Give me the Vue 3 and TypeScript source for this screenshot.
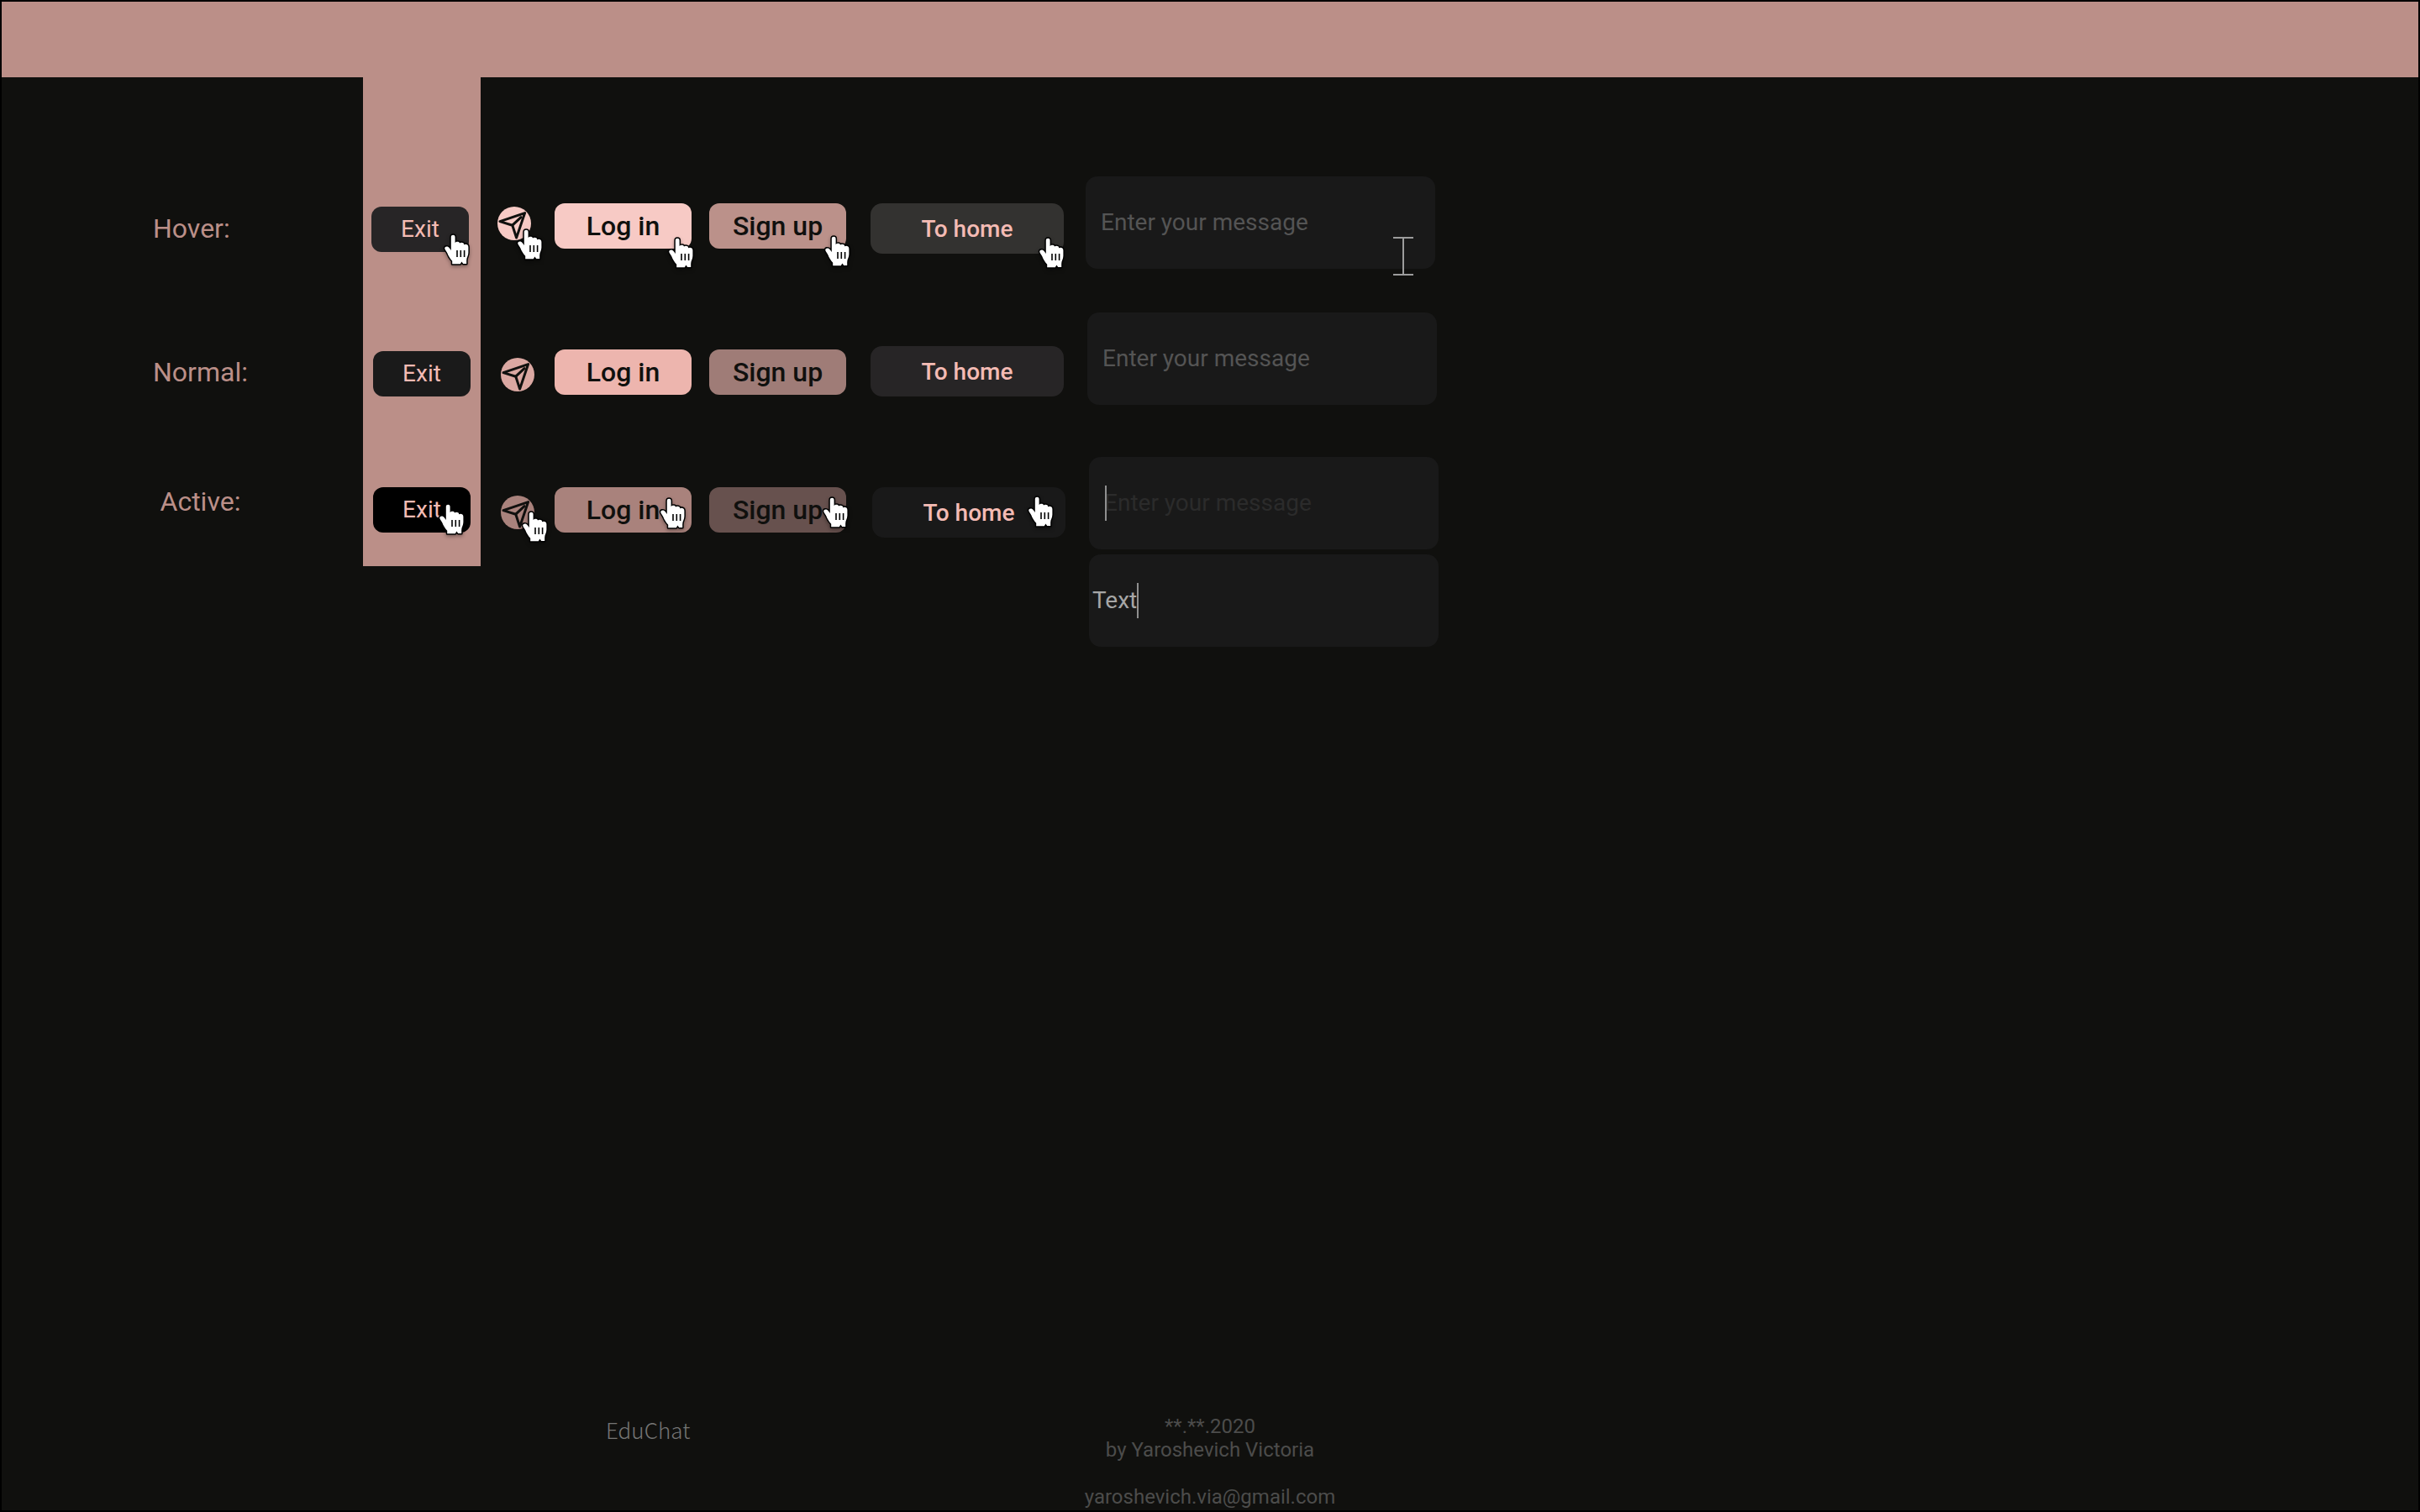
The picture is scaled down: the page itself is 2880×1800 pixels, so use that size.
<script setup lang="ts">
type State = 'hover' | 'normal' | 'active'

interface Point {
  x: number
  y: number
}

interface Sample {
  state: State
  pointer?: Point
}

interface ButtonColumn {
  kind: 'exit' | 'send' | 'login' | 'signup' | 'home'
  text: string
  samples: Sample[]
}

interface Field {
  id: string
  state: State
  value: string
  caret?: number
  beam?: Point
}

const labels: { state: State; text: string }[] = [
  { state: 'hover', text: 'Hover:' },
  { state: 'normal', text: 'Normal:' },
  { state: 'active', text: 'Active:' },
]

// Pointer positions are measured from the top left corner of each button.
function samples(hover: Point, active: Point): Sample[] {
  return [
    { state: 'hover', pointer: hover },
    { state: 'normal' },
    { state: 'active', pointer: active },
  ]
}

const columns: ButtonColumn[] = [
  { kind: 'exit', text: 'Exit', samples: samples({ x: 86, y: 32 }, { x: 78, y: 19 }) },
  { kind: 'send', text: '', samples: samples({ x: 23, y: 26 }, { x: 25, y: 18 }) },
  { kind: 'login', text: 'Log in', samples: samples({ x: 135, y: 40 }, { x: 125, y: 12 }) },
  { kind: 'signup', text: 'Sign up', samples: samples({ x: 137, y: 38 }, { x: 135, y: 11 }) },
  { kind: 'home', text: 'To home', samples: samples({ x: 200, y: 40 }, { x: 185, y: 10 }) },
]

const fields: Field[] = [
  { id: 'message-hover', state: 'hover', value: '', beam: { x: 366, y: 72 } },
  { id: 'message-normal', state: 'normal', value: '' },
  { id: 'message-active', state: 'active', value: '', caret: 19 },
  { id: 'message-typed', state: 'active', value: 'Text', caret: 57 },
]

const at = (p: Point) => ({ left: `${p.x}px`, top: `${p.y}px` })
</script>

<template>
  <div class="page">
    <header class="bar"></header>

    <main class="board">
      <div class="column labels">
        <span v-for="l in labels" :key="l.state" class="label" :class="l.state">{{ l.text }}</span>
      </div>

      <div v-for="c in columns" :key="c.kind" class="column" :class="c.kind">
        <div v-for="s in c.samples" :key="s.state" class="sample" :class="s.state">
          <button type="button" class="button" :aria-label="c.text || 'Send'">
            <svg v-if="c.kind === 'send'" class="plane" viewBox="0 0 40 40" aria-hidden="true">
              <path d="M3 17.6 L32.6 7.6 L22.6 37 L17.8 22.2 Z" />
              <path d="M17.8 22.2 L28 12.6" />
            </svg>
            <template v-else>{{ c.text }}</template>
          </button>
          <svg v-if="s.pointer" class="pointer" :style="at(s.pointer)" viewBox="0 0 31 38" aria-hidden="true">
            <path
              class="hand"
              d="M8.8 4.2 C8.8 1 13.6 1 13.6 4.2 V11 C15 9.2 18.8 9.4 19 11.6 C20.6 10.2 24.2 10.8 24.2 13.2 C26 12 29.4 12.8 29.4 16 V22.5 C29.4 26.5 27.2 28.5 27.2 32 V36 H23.2 L21.4 33.4 L19.8 36.2 H10.2 V32.8 C7.4 29.5 5.6 26.8 4.2 23 C3.4 21 1.4 19.4 1.2 17.4 C1.4 15.2 4.6 14.6 6.4 16.8 L8.8 20 Z"
            />
            <path class="creases" d="M16 20 V28 M20.3 20 V28 M24.6 20 V28" />
          </svg>
        </div>
      </div>

      <div class="column message">
        <div v-for="f in fields" :key="f.id" class="sample" :class="f.state">
          <input
            :id="f.id"
            class="field"
            :class="{ typed: f.value }"
            type="text"
            :value="f.value"
            placeholder="Enter your message"
            aria-label="Message"
          />
          <span v-if="f.caret" class="caret" :style="{ left: `${f.caret}px` }"></span>
          <span v-if="f.beam" class="beam" :style="at(f.beam)"></span>
        </div>
      </div>
    </main>

    <footer class="footer">
      <div class="brand">EduChat</div>
      <div class="credits">
        <p>**.**.2020</p>
        <p>by Yaroshevich Victoria</p>
        <a href="mailto:yaroshevich.via@gmail.com">yaroshevich.via@gmail.com</a>
      </div>
    </footer>
  </div>
</template>

<style>
body {
  margin: 0;
  background: #10100e;
}
</style>

<style scoped>
.page {
  display: flex;
  flex-direction: column;
  box-sizing: border-box;
  min-height: 100vh;
  border: 2px solid #000;
  background: #10100e;
  font-family: Roboto, "Liberation Sans", sans-serif;
}

.bar {
  height: 90px;
  background: #bb8f88;
}

.board {
  display: flex;
  flex: 1;
  align-items: flex-start;
  padding-left: 180px;
}

.column {
  display: grid;
  flex: none;
  align-items: start;
  box-sizing: border-box;
}

.labels {
  width: 112px;
  margin-right: 138px;
  padding-top: 161px;
  grid-template-rows: 171px 154px auto;
}

.label {
  color: #bb8f88;
  font-size: 32px;
  line-height: 38px;
  white-space: nowrap;
}

.label.active {
  justify-self: center;
}

.sample {
  position: relative;
}

.button {
  display: block;
  width: 100%;
  height: 100%;
  padding: 0;
  border: 0;
  border-radius: 12px;
  font-family: inherit;
  cursor: pointer;
}

/* Exit, on its accent band */
.exit {
  width: 140px;
  padding: 154px 12px 40px 10px;
  background: #bb8f88;
  grid-template-rows: 172px 162px auto;
}

.exit .sample {
  width: 116px;
  height: 54px;
  justify-self: end;
}

.exit .sample.hover {
  justify-self: start;
}

.exit .button {
  padding-bottom: 2px;
  background: #1a1a1a;
  color: #f4bbb4;
  font-size: 28px;
}

.exit .hover .button {
  background: #272526;
}

.exit .active .button {
  background: #000;
}

/* Send */
.send {
  width: 44px;
  margin-left: 20px;
  padding-top: 154px;
  grid-template-rows: 180px 164px auto;
}

.send .sample {
  width: 40px;
  height: 40px;
  justify-self: end;
}

.send .sample.hover {
  justify-self: start;
}

.send .button {
  border-radius: 50%;
  background: #dba8a2;
}

.send .hover .button {
  background: #f7cac5;
}

.send .active .button {
  background: #a9827c;
}

.plane {
  display: block;
  width: 40px;
  height: 40px;
  fill: none;
  stroke: #10100e;
  stroke-width: 3;
  stroke-linecap: round;
  stroke-linejoin: round;
}

/* Log in and Sign up */
.login,
.signup {
  width: 163px;
  padding-top: 150px;
  grid-template-rows: 174px 164px auto;
}

.login {
  margin-left: 24px;
}

.signup {
  margin-left: 21px;
}

.login .sample,
.signup .sample {
  height: 54px;
}

.login .button,
.signup .button {
  color: #10100e;
  font-size: 32px;
  font-weight: 500;
}

.login .button {
  background: #edb5ae;
}

.login .hover .button {
  background: #f7cac5;
}

.login .active .button {
  background: #a9827c;
}

.signup .button {
  background: #9f7c77;
}

.signup .hover .button {
  background: #bb918a;
}

.signup .active .button {
  background: #67514e;
}

/* To home */
.home {
  width: 232px;
  margin-left: 29px;
  padding-top: 150px;
  grid-template-rows: 170px 168px auto;
}

.home .sample {
  width: 230px;
  height: 60px;
}

.home .sample.active {
  justify-self: end;
}

.home .button {
  border-radius: 14px;
  background: #272526;
  color: #f4bbb4;
  font-size: 28px;
  font-weight: 500;
}

.home .hover .button {
  background: #333230;
}

.home .active .button {
  background: #191919;
}

/* Message field */
.message {
  width: 420px;
  margin-left: 24px;
  padding-top: 118px;
  grid-template-rows: 162px 172px 116px auto;
}

.message .sample {
  width: 416px;
  height: 110px;
  justify-self: center;
}

.message .sample.hover {
  justify-self: start;
}

.message .sample.active {
  justify-self: end;
}

.field {
  display: block;
  box-sizing: border-box;
  width: 100%;
  height: 100%;
  padding: 0 18px 2px;
  border: 0;
  border-radius: 14px;
  background: #191919;
  color: #a6a6a6;
  font-family: inherit;
  font-size: 28px;
}

.field.typed {
  padding: 0 4px 2px;
}

.field::placeholder {
  color: #545454;
  opacity: 1;
}

.active .field::placeholder {
  color: #2b2b2b;
}

.caret {
  position: absolute;
  top: 34px;
  width: 2px;
  height: 42px;
  background: #8f8f8f;
}

.beam {
  position: absolute;
  box-sizing: border-box;
  width: 24px;
  height: 46px;
  border-top: 2px solid #9c9c9c;
  border-bottom: 2px solid #9c9c9c;
  background: linear-gradient(#9c9c9c, #9c9c9c) center / 2px 100% no-repeat;
}

.pointer {
  position: absolute;
  width: 31px;
  height: 38px;
  overflow: visible;
  pointer-events: none;
  filter: drop-shadow(0 2px 2px rgba(0, 0, 0, 0.35));
}

.hand {
  fill: #fff;
  stroke: #000;
  stroke-width: 3;
  stroke-linejoin: round;
  paint-order: stroke;
}

.creases {
  fill: none;
  stroke: #000;
  stroke-width: 1.6;
}

.footer {
  display: grid;
  grid-template-columns: repeat(4, 1fr);
  padding-bottom: 2px;
}

.brand {
  grid-area: 1 / 2 / 2 / 4;
  padding-top: 2px;
  color: #757574;
  font-family: "Noto Sans CJK SC", Roboto, sans-serif;
  font-size: 26px;
  font-weight: 300;
  line-height: 32px;
}

.credits {
  grid-area: 1 / 2 / 2 / 4;
  justify-self: center;
  color: #4c4c4b;
  font-size: 24px;
  line-height: 28px;
  text-align: center;
}

.credits p {
  margin: 0;
}

.credits a {
  display: block;
  margin-top: 28px;
  color: inherit;
  text-decoration: none;
}
</style>
